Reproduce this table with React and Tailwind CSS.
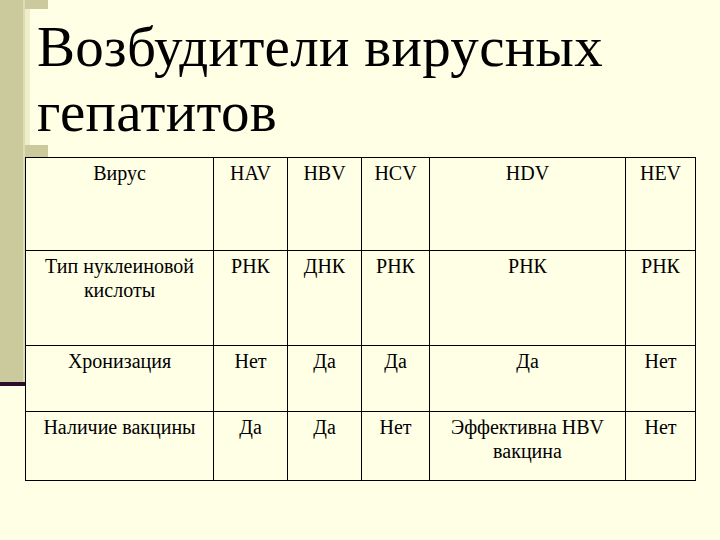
const rows = [
  ["Вирус", "HAV", "HBV", "HCV", "HDV", "HEV"],
  ["Тип нуклеиновой кислоты", "РНК", "ДНК", "РНК", "РНК", "РНК"],
  ["Хронизация", "Нет", "Да", "Да", "Да", "Нет"],
  ["Наличие вакцины", "Да", "Да", "Нет", "Эффективна HBV вакцина", "Нет"],
];

const heights = ["h-[93px]", "h-[95px]", "h-[66px]", "h-[69px]"];

export default function App() {
  return (
    <div className="w-[720px] h-[540px] bg-[#FFFFE6] flex overflow-hidden font-['Liberation_Serif','Times_New_Roman',serif] text-black">
      {/* left decorative bar */}
      <div className="w-[25px] flex flex-col shrink-0">
        <div className="h-[382px] bg-[#CBCA9C] flex">
          <div className="w-[23px] bg-[#CBCA9C]"></div>
          <div className="w-[2px] bg-[#DDDCB6]"></div>
        </div>
        <div className="h-[4px] bg-[#2E0A2C]"></div>
      </div>

      <div className="flex-1 flex flex-col">
        <div className="w-[23px] h-[9px] bg-[#CBCA9C]"></div>
        <div className="flex">
          <div className="w-[5px] bg-[#EFEECB]"></div>
          <h1 className="pl-[7px] pt-[5px] text-[57px] leading-[65px] tracking-[0.3px] h-[136px] font-['Liberation_Serif','Times_New_Roman',serif]">
            Возбудители вирусных
            <br />
            гепатитов
          </h1>
        </div>
        <div className="w-[23px] h-[12px] bg-[#CBCA9C]"></div>

        <table className="table-fixed border-collapse w-[670px] text-[20px] leading-[24px] font-['Liberation_Serif','Times_New_Roman',serif]">
          <colgroup>
            <col className="w-[188px]" />
            <col className="w-[74px]" />
            <col className="w-[74px]" />
            <col className="w-[68px]" />
            <col className="w-[196px]" />
            <col className="w-[70px]" />
          </colgroup>
          <tbody>
            {rows.map((row, i) => (
              <tr key={i} className={heights[i]}>
                {row.map((cell, j) => (
                  <td
                    key={j}
                    className={
                      "border-[1.5px] border-black align-top text-center pt-[3px] text-[20px] leading-[24px] font-['Liberation_Serif','Times_New_Roman',serif] " +
                      (j === 0 ? "px-3" : "px-2")
                    }
                  >
                    {cell}
                  </td>
                ))}
              </tr>
            ))}
          </tbody>
        </table>
      </div>
    </div>
  );
}
